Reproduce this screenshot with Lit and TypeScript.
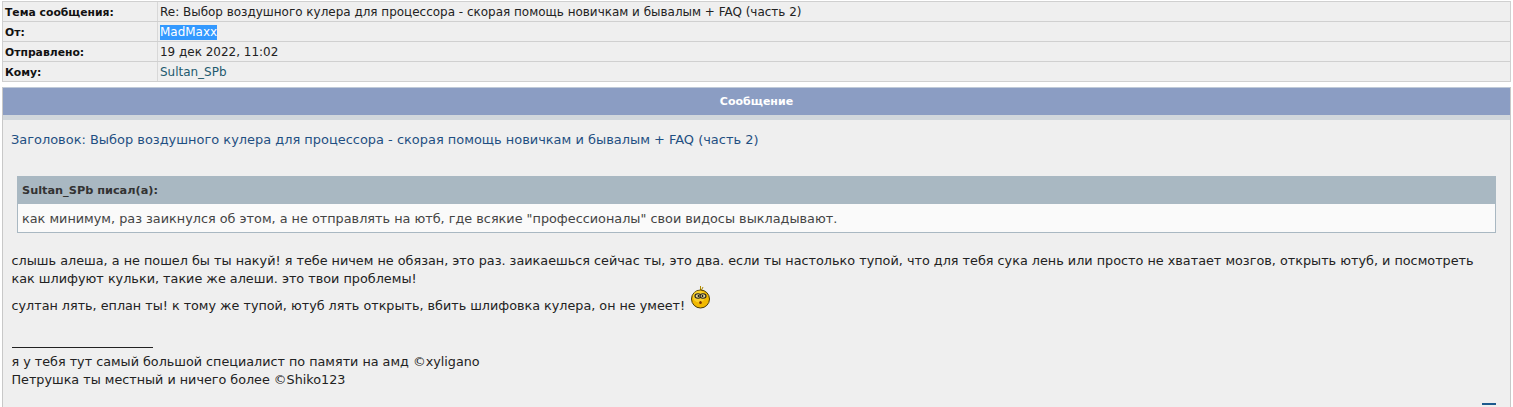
import { LitElement, html, css } from "lit";
import { customElement } from "lit/decorators.js";

@customElement("app-root")
export class AppRoot extends LitElement {
  static styles = css`
    :host { display: block; height: 407px; overflow: hidden; background: #fff; font-family: "DejaVu Sans", Verdana, sans-serif; font-size: 12px; color: #222; padding: 1px 2px 0; box-sizing: border-box; }
    .meta { border-top: 1px solid #d0d0d0; border-left: 1px solid #d0d0d0; border-right: 1px solid #d0d0d0; margin-bottom: 5px; }
    .row { display: grid; grid-template-columns: 155px 1fr; height: 20px; border-bottom: 1px solid #d0d0d0; box-sizing: border-box; background: #efefef; align-items: center; }
    .row b { font-size: 10.8px; color: #111; padding-left: 2px; border-right: 1px solid #d8d8d8; height: 19px; line-height: 21px; box-sizing: border-box; }
    .row > span { padding-left: 2px; line-height: 21px; height: 19px; font-size: 11.97px; }
    .sel { background: #3399ff; color: #fff; display: inline-block; line-height: 15px; }
    .link { color: #1d5a6e; }
    .panel { background: #efefef; border-left: 1px solid #c8c8c8; border-right: 1px solid #c8c8c8; height: 320px; }
    .head { background: #8b9dc3; color: #fff; height: 28px; line-height: 28px; text-align: center; font-weight: bold; font-size: 11px; border-top: 1px solid #c0cad8; box-sizing: border-box; }
    .strip { height: 5px; background: #d1d7dc; }
    .body { padding: 12px 14px 0 8px; line-height: 18px; }
    .title { color: #1f4f82; height: 18px; margin-bottom: 26px; line-height: 15px; font-size: 12.94px; }
    .quote { margin: 0 0 0 6px; }
    .qh { background: #a9b8c2; height: 28px; line-height: 30px; padding-left: 5px; font-weight: bold; font-size: 11.3px; color: #333; }
    .qb { background: #fafafa; border-left: 1px solid #a9b8c2; border-right: 1px solid #a9b8c2; border-bottom: 1px solid #a9b8c2; height: 29px; line-height: 30px; padding-left: 4px; color: #444; box-sizing: border-box; font-size: 12.82px; }
    .post { margin: 19px 0 0 0.5px; color: #222; font-size: 12.76px; }
    .para { margin: 0; padding-right: 16px; font-size: 12.8px; }
    .second { margin: 1px 0 0; display: flex; align-items: flex-end; height: 26px; }
    .second svg { margin-left: 6px; margin-bottom: 5px; }
    .rule { width: 141px; height: 1px; background: #222; margin: 32px 0 0 0.5px; }
    .sig { margin-top: 5px; }
    .foot { display: flex; justify-content: flex-end; margin-top: 14px; }
    .foot i { display: block; width: 14px; height: 2px; background: #1d5a8e; }
  `;

  render() {
    return html`
      <div class="meta">
        <div class="row"><b>Тема сообщения:</b><span>Re: Выбор воздушного кулера для процессора - скорая помощь новичкам и бывалым + FAQ (часть 2)</span></div>
        <div class="row"><b>От:</b><span><span class="sel">MadMaxx</span></span></div>
        <div class="row"><b>Отправлено:</b><span>19 дек 2022, 11:02</span></div>
        <div class="row"><b>Кому:</b><span class="link">Sultan_SPb</span></div>
      </div>
      <div class="panel">
        <div class="head">Сообщение</div>
        <div class="strip"></div>
        <div class="body">
          <div class="title">Заголовок: Выбор воздушного кулера для процессора - скорая помощь новичкам и бывалым + FAQ (часть 2)</div>
          <div class="quote">
            <div class="qh">Sultan_SPb писал(а):</div>
            <div class="qb">как минимум, раз заикнулся об этом, а не отправлять на ютб, где всякие "профессионалы" свои видосы выкладывают.</div>
          </div>
          <div class="post">
            <p class="para">слышь алеша, а не пошел бы ты накуй! я тебе ничем не обязан, это раз. заикаешься сейчас ты, это два. если ты настолько тупой, что для тебя сука лень или просто не хватает мозгов, открыть ютуб, и посмотреть как шлифуют кульки, такие же алеши. это твои проблемы!</p>
            <p class="second">
              <span>султан лять, еплан ты! к тому же тупой, ютуб лять открыть, вбить шлифовка кулера, он не умеет!</span>
              <svg width="20" height="24" viewBox="0 0 20 24">
                <path d="M9.5 0 L9.5 4 M12 1 L10.5 4" stroke="#b08a00" fill="none"/>
                <circle cx="9.5" cy="13" r="9" fill="#f2b900" stroke="#4a3800"/>
                <circle cx="8" cy="10.5" r="6" fill="#ffe04a" opacity="0.6"/>
                <ellipse cx="7" cy="10" rx="3" ry="2.2" fill="#e8d890" stroke="#222" stroke-width="1.1"/>
                <ellipse cx="12" cy="10" rx="3" ry="2.2" fill="#e8d890" stroke="#222" stroke-width="1.1"/>
                <circle cx="7.5" cy="10" r="0.9" fill="#111"/>
                <circle cx="11.5" cy="10" r="0.9" fill="#111"/>
                <ellipse cx="9.5" cy="16.5" rx="1.3" ry="1.5" fill="#7a3000"/>
              </svg>
            </p>
            <div class="rule"></div>
            <div class="sig">я у тебя тут самый большой специалист по памяти на амд ©xyligano<br />Петрушка ты местный и ничего более ©Shiko123</div>
          </div>
          <div class="foot"><i></i></div>
        </div>
      </div>
    `;
  }
}
